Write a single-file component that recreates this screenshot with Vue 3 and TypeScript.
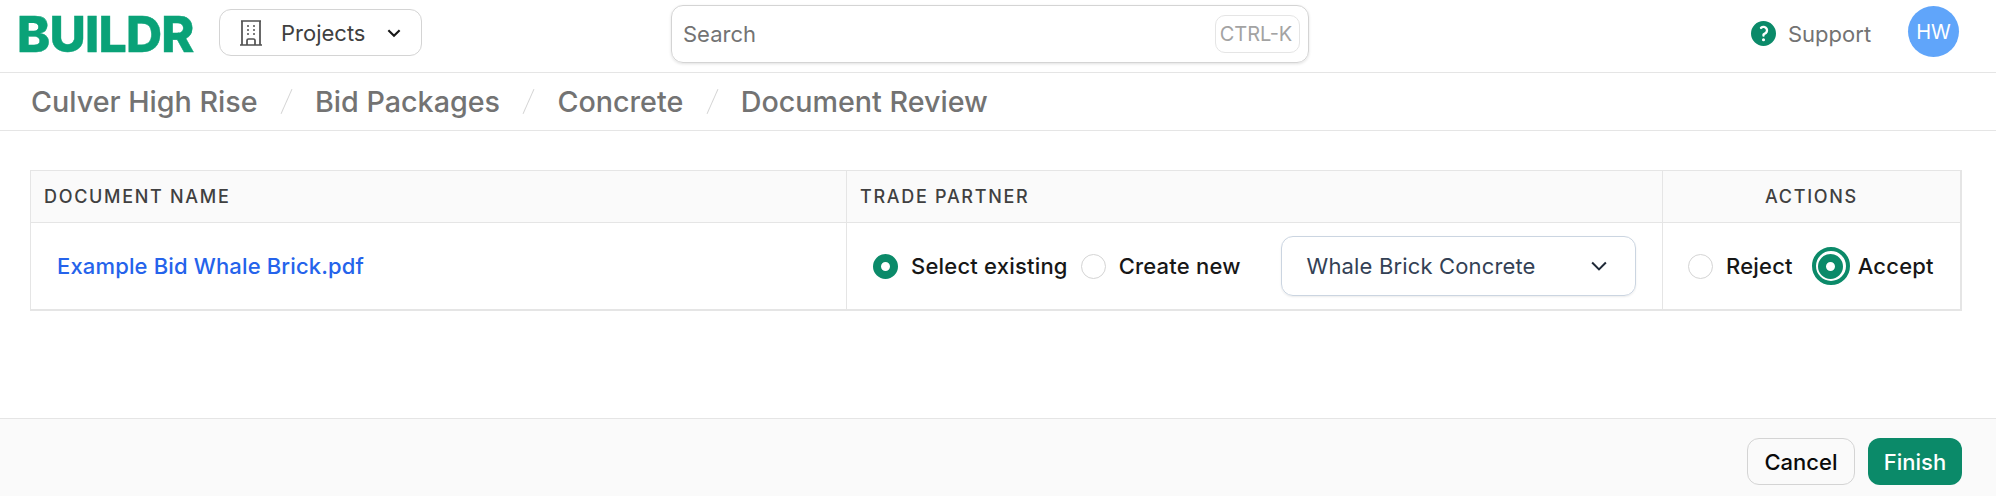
<script setup lang="ts">
const crumbs: string[] = ['Culver High Rise', 'Bid Packages', 'Concrete', 'Document Review']
</script>

<template>
  <div class="page">
    <header class="topbar">
      <div class="logo">BUILDR</div>
      <button class="projects">
        <svg class="building" viewBox="3 2.5 18 19" fill="none" stroke="#525252" stroke-width="1.3">
          <path d="M3.75 21h16.5M4.5 3h15M5.25 3v18m13.5-18v18M9 6.75h1.5m-1.5 3h1.5m-1.5 3h1.5m3-6H15m-1.5 3H15m-1.5 3H15M9 21v-3.375c0-.621.504-1.125 1.125-1.125h3.75c.621 0 1.125.504 1.125 1.125V21" />
        </svg>
        <span>Projects</span>
        <svg class="chev" viewBox="0 0 24 24" fill="none" stroke="#171717" stroke-width="2.8">
          <path d="M19.5 8.25l-7.5 7.5-7.5-7.5" />
        </svg>
      </button>
      <div class="search">
        <span class="placeholder">Search</span>
        <kbd class="kbd">CTRL-K</kbd>
      </div>
      <div class="support">
        <svg class="help" viewBox="2 2 16 16" fill="#0b8a69">
          <path fill-rule="evenodd" clip-rule="evenodd" d="M18 10a8 8 0 11-16 0 8 8 0 0116 0zM8.94 6.94a.75.75 0 11-1.061-1.061 3 3 0 112.871 5.026v.345a.75.75 0 01-1.5 0v-.5c0-.72.57-1.172 1.081-1.287A1.5 1.5 0 108.94 6.94zM10 15a1 1 0 100-2 1 1 0 000 2z" />
        </svg>
        <span>Support</span>
      </div>
      <div class="avatar">HW</div>
    </header>

    <nav class="crumbs">
      <template v-for="(c, i) in crumbs" :key="c">
        <span v-if="i > 0" class="sep"></span>
        <span class="crumb">{{ c }}</span>
      </template>
    </nav>

    <main class="content">
      <div class="table">
        <div class="th">DOCUMENT NAME</div>
        <div class="th">TRADE PARTNER</div>
        <div class="th center">ACTIONS</div>
        <div class="td doc"><a class="link">Example Bid Whale Brick.pdf</a></div>
        <div class="td partner">
          <span class="radio on"></span><span class="label first">Select existing</span>
          <span class="radio second"></span><span class="label first">Create new</span>
          <div class="select">
            <span>Whale Brick Concrete</span>
            <svg class="chev2" viewBox="0 0 24 24" fill="none" stroke="#1f2937" stroke-width="2.2">
              <path d="M19.5 8.25l-7.5 7.5-7.5-7.5" />
            </svg>
          </div>
        </div>
        <div class="td actions">
          <span class="radio"></span><span class="label reject">Reject</span>
          <span class="focus"><span class="radio on"></span></span><span class="label accept">Accept</span>
        </div>
      </div>
    </main>

    <footer class="footer">
      <button class="btn cancel">Cancel</button>
      <button class="btn finish">Finish</button>
    </footer>
  </div>
</template>

<style>
html, body { margin: 0; background: #fff; }
</style>

<style scoped>
.page {
  width: 1996px;
  height: 496px;
  display: flex;
  flex-direction: column;
  font-family: Inter, "Liberation Sans", sans-serif;
  overflow: hidden;
}
.topbar {
  height: 73px;
  flex: none;
  box-sizing: border-box;
  border-bottom: 1px solid #e5e5e5;
  display: flex;
  align-items: flex-start;
  padding-left: 17px;
}
.logo {
  font-size: 50px;
  font-weight: 800;
  line-height: 1;
  color: #0aa278;
  width: 202px;
  margin-top: 9px;
  letter-spacing: -0.8px;
  -webkit-text-stroke: 0.4px #0aa278;
}
.projects {
  width: 203px;
  height: 47px;
  margin-top: 9px;
  box-sizing: border-box;
  border: 1px solid #d4d4d4;
  border-radius: 12px;
  background: #fff;
  display: flex;
  align-items: center;
  padding: 0 0 0 19px;
  font: 400 22px Inter, sans-serif;
  color: #404040;
}
.building { width: 24px; height: 26px; margin-right: 18px; flex: none; }
.chev { width: 18px; height: 18px; margin-left: 20px; flex: none; }
.search {
  width: 638px;
  height: 58px;
  margin-top: 5px;
  box-sizing: border-box;
  margin-left: 249px;
  border: 1px solid #d4d4d4;
  border-radius: 12px;
  box-shadow: 0 1px 3px rgba(0, 0, 0, 0.12);
  display: flex;
  align-items: center;
  justify-content: space-between;
  padding: 0 8px 0 11px;
  font-size: 22px;
  color: #737373;
}
.kbd {
  width: 85px;
  height: 38px;
  box-sizing: border-box;
  border: 1px solid #e5e5e5;
  border-radius: 10px;
  display: flex;
  align-items: center;
  justify-content: center;
  padding-right: 3px;
  font: 400 20px Inter, sans-serif;
  color: #a3a3a3;
}
.support {
  display: flex;
  align-items: center;
  margin-left: 442px;
  margin-top: 21px;
  height: 25px;
  font-size: 22px;
  color: #737373;
  width: 157px;
}
.help { width: 25px; height: 25px; margin-right: 12px; flex: none; }
.avatar {
  width: 51px;
  height: 51px;
  margin-top: 6px;
  border-radius: 50%;
  background: #60a5fa;
  color: #fff;
  font-size: 20px;
  display: flex;
  align-items: center;
  justify-content: center;
}
.crumbs {
  height: 58px;
  flex: none;
  box-sizing: border-box;
  border-bottom: 1px solid #e5e5e5;
  display: flex;
  align-items: center;
  padding-left: 31px;
  font-size: 28.7px;
  font-weight: 500;
  color: #737373;
}
.sep {
  width: 1px;
  height: 27px;
  background: #d4d4d4;
  transform: rotate(24deg);
  margin: 0 28.2px;
}
.content {
  flex: 1;
  padding: 39px 34px 0 30px;
}
.table {
  display: grid;
  grid-template-columns: 816px 816px 1fr;
  grid-template-rows: 52px 86px;
  border: solid #e5e5e5;
  border-width: 1px 2px 2px 1px;
}
.th {
  background: #fafafa;
  border-bottom: 1px solid #e5e5e5;
  border-right: 1px solid #e5e5e5;
  display: flex;
  align-items: center;
  padding-left: 13px;
  font-size: 18px;
  font-weight: 500;
  letter-spacing: 1.7px;
  color: #404040;
}
.th:nth-child(3) { border-right: 0; }
.th.center { justify-content: center; padding-left: 0; }
.td {
  border-right: 1px solid #e5e5e5;
  display: flex;
  align-items: center;
  font-size: 22px;
}
.td:last-child { border-right: 0; }
.doc { padding-left: 26px; }
.link { color: #2563eb; font-weight: 500; letter-spacing: 0.15px; }
.partner { padding-left: 26px; }
.radio {
  width: 25px;
  height: 25px;
  box-sizing: border-box;
  border: 1px solid #d4d4d4;
  border-radius: 50%;
  background: #fff;
  flex: none;
}
.radio.on {
  border: 8px solid #0b8a69;
}
.second { margin-left: 13px; }
.label { font-weight: 500; color: #171717; letter-spacing: 0.2px; }
.first { margin-left: 13px; }
.select {
  width: 355px;
  height: 60px;
  box-sizing: border-box;
  margin-left: 40px;
  border: 1px solid #cbd5e1;
  border-radius: 12px;
  box-shadow: 0 1px 2px rgba(0, 0, 0, 0.08);
  display: flex;
  align-items: center;
  justify-content: space-between;
  padding: 0 25px;
  color: #334155;
  letter-spacing: 0.15px;
}
.chev2 { width: 22px; height: 22px; }
.actions { padding-left: 25px; }
.reject { margin-left: 13px; }
.focus {
  width: 38px;
  height: 38px;
  box-sizing: border-box;
  margin-left: 19px;
  border: 4px solid #0b8a69;
  border-radius: 50%;
  display: flex;
  align-items: center;
  justify-content: center;
  flex: none;
}
.accept { margin-left: 8px; }
.footer {
  height: 78px;
  flex: none;
  box-sizing: border-box;
  border-top: 1px solid #e5e5e5;
  background: #fafafa;
  display: flex;
  align-items: flex-start;
  justify-content: flex-end;
  gap: 13px;
  padding: 19px 34px 0 0;
}
.btn {
  height: 47px;
  border-radius: 12px;
  font: 500 22px Inter, sans-serif;
  box-sizing: border-box;
}
.cancel {
  width: 108px;
  background: #fafafa;
  border: 1px solid #d4d4d4;
  color: #0a0a0a;
}
.finish {
  width: 94px;
  background: #0b8a69;
  border: 0;
  color: #fff;
}
</style>
